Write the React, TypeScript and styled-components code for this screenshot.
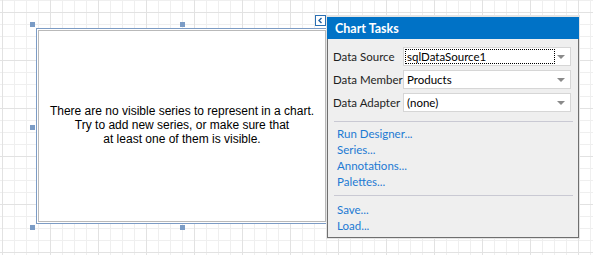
import React from "react";
import styled, { createGlobalStyle } from "styled-components";

const Global = createGlobalStyle`
  html, body { margin: 0; padding: 0; background: #fff; }
  body { width: 593px; height: 255px; overflow: hidden; }
`;

const Surface = styled.div`
  position: relative;
  width: 593px;
  height: 255px;
  overflow: hidden;
  background-color: #ffffff;
  background-image:
    linear-gradient(to right, #e2e2e2 1px, transparent 1px),
    linear-gradient(to bottom, #e2e2e2 1px, transparent 1px),
    linear-gradient(to right, #efefef 1px, transparent 1px),
    linear-gradient(to bottom, #efefef 1px, transparent 1px);
  background-size: 48px 48px, 48px 48px, 12px 12px, 12px 12px;
  background-position: 2px 0, 0 12px, 2px 0, 0 0;
`;

const ChartControl = styled.div`
  position: absolute;
  left: 36px;
  top: 28px;
  width: 292px;
  height: 196px;
  box-sizing: border-box;
  border: 1px solid #7d9cc5;
  padding: 1px;
  background: #fff;
  display: flex;
`;

const ChartArea = styled.div`
  flex: 1;
  border: 1px solid #b9b9b9;
  display: flex;
  align-items: center;
  justify-content: center;
  text-align: center;
  font-family: "Liberation Sans", Arial, sans-serif;
  font-size: 12px;
  line-height: 14px;
  color: #000;
  padding-bottom: 2px;
`;

const Handle = styled.div<{ $x: number; $y: number }>`
  position: absolute;
  left: ${(p) => p.$x}px;
  top: ${(p) => p.$y}px;
  width: 5px;
  height: 5px;
  background: #7b9cc6;
`;

const CollapseButton = styled.button`
  position: absolute;
  left: 315px;
  top: 15px;
  width: 11px;
  height: 11px;
  padding: 0;
  margin: 0;
  box-sizing: border-box;
  border: 1px solid #2a6fb3;
  background: #fff;
  display: flex;
  align-items: center;
  justify-content: center;
`;

const TaskPanel = styled.div`
  position: absolute;
  left: 327px;
  top: 16px;
  width: 252px;
  height: 222px;
  box-sizing: border-box;
  display: flex;
  flex-direction: column;
  font-family: Lato, "Segoe UI", sans-serif;
  box-shadow: 0 0 0 1px #e4e4e4;
`;

const PanelHeader = styled.div`
  height: 23px;
  background: #0072c6;
  color: #fff;
  font-weight: bold;
  font-size: 12.5px;
  display: flex;
  align-items: center;
  padding-left: 8px;
  padding-top: 1px;
  border-top: 1px solid #e4e4e4;
  box-sizing: border-box;
`;

const PanelBody = styled.div`
  flex: 1;
  background: #efefef;
  border: 1px solid #6f6f6f;
  border-top: none;
  padding: 8px 5px 0 5px;
  display: flex;
  flex-direction: column;
`;

const FieldRow = styled.div`
  display: flex;
  align-items: center;
  height: 19px;
  margin-bottom: 4px;
`;

const FieldLabel = styled.div`
  width: 70px;
  font-size: 11.5px;
  color: #1e1e1e;
  white-space: nowrap;
`;

const ComboBox = styled.div`
  width: 168px;
  height: 19px;
  box-sizing: border-box;
  border: 1px solid #d6d6d6;
  background: #fff;
  display: flex;
  align-items: center;
  padding-left: 1px;
  font-size: 11.5px;
  color: #000;
`;

const ComboText = styled.span<{ $focused?: boolean }>`
  flex: 0 0 ${(p) => (p.$focused ? "150px" : "auto")};
  box-sizing: border-box;
  height: 15px;
  line-height: 13px;
  padding-left: 1px;
  border: 1px dotted ${(p) => (p.$focused ? "#000" : "transparent")};
  white-space: nowrap;
`;

const Arrow = styled.span`
  margin-left: auto;
  margin-right: 5px;
  width: 0;
  height: 0;
  border-left: 4px solid transparent;
  border-right: 4px solid transparent;
  border-top: 4px solid #8a8a8a;
`;

const Separator = styled.div<{ $top: number; $bottom: number }>`
  height: 1px;
  background: #c9c9d3;
  margin: ${(p) => p.$top}px 0 ${(p) => p.$bottom}px 1px;
`;

const LinkList = styled.div`
  display: flex;
  flex-direction: column;
  padding-left: 4px;
`;

const TaskLink = styled.a`
  font-size: 11.5px;
  line-height: 16px;
  height: 16px;
  color: #1d7ad3;
  text-decoration: none;
  cursor: pointer;
`;

const handles: Array<[number, number]> = [
  [30, 22], [180, 22], [330, 22],
  [30, 125], [330, 125],
  [30, 225], [180, 225], [330, 225],
];

export default function App() {
  return (
    <>
      <Global />
      <Surface>
        <ChartControl>
          <ChartArea>
            There are no visible series to represent in a chart.
            <br />
            Try to add new series, or make sure that
            <br />
            at least one of them is visible.
          </ChartArea>
        </ChartControl>
        {handles.map(([x, y]) => (
          <Handle key={`${x}-${y}`} $x={x} $y={y} />
        ))}
        <CollapseButton aria-label="Collapse">
          <svg width="7" height="7" viewBox="0 0 7 7">
            <path d="M4.5 1 L2 3.5 L4.5 6" stroke="#1e5fa3" strokeWidth="1.4" fill="none" />
          </svg>
        </CollapseButton>
        <TaskPanel>
          <PanelHeader>Chart Tasks</PanelHeader>
          <PanelBody>
            <FieldRow>
              <FieldLabel>Data Source</FieldLabel>
              <ComboBox>
                <ComboText $focused>sqlDataSource1</ComboText>
                <Arrow />
              </ComboBox>
            </FieldRow>
            <FieldRow>
              <FieldLabel>Data Member</FieldLabel>
              <ComboBox>
                <ComboText>Products</ComboText>
                <Arrow />
              </ComboBox>
            </FieldRow>
            <FieldRow>
              <FieldLabel>Data Adapter</FieldLabel>
              <ComboBox>
                <ComboText>(none)</ComboText>
                <Arrow />
              </ComboBox>
            </FieldRow>
            <Separator $top={5} $bottom={4} />
            <LinkList>
              <TaskLink>Run Designer...</TaskLink>
              <TaskLink>Series...</TaskLink>
              <TaskLink>Annotations...</TaskLink>
              <TaskLink>Palettes...</TaskLink>
            </LinkList>
            <Separator $top={5} $bottom={6} />
            <LinkList>
              <TaskLink>Save...</TaskLink>
              <TaskLink>Load...</TaskLink>
            </LinkList>
          </PanelBody>
        </TaskPanel>
      </Surface>
    </>
  );
}
